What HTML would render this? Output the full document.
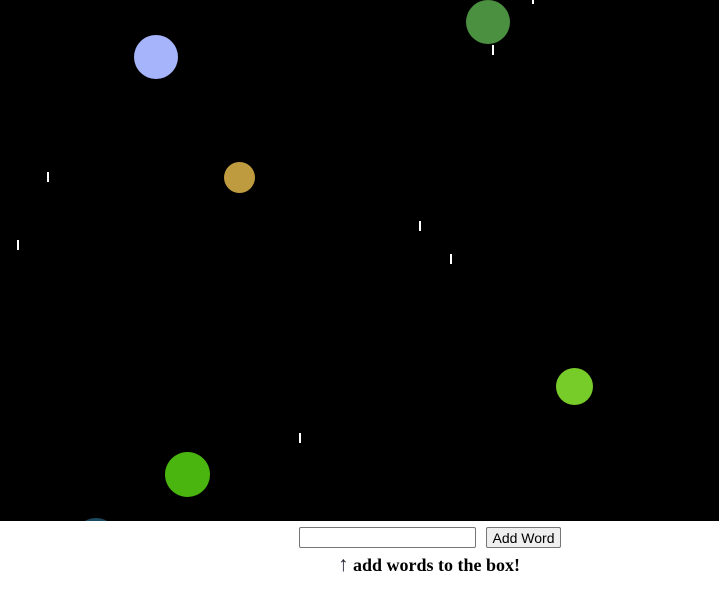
<!DOCTYPE html><html><head><style>
body{margin:0;width:719px;height:591px;background:#fff;position:relative;overflow:hidden;font-family:"Liberation Serif",serif}
#c{position:absolute;left:0;top:0;width:719px;height:521px;background:#000;overflow:hidden}
.d{position:absolute;border-radius:50%}
.t{position:absolute;width:2px;height:10px;background:#fff}
input{position:absolute;left:299px;top:527px;width:171px;height:17px;border:1px solid #767676;border-radius:2px;padding:1px 2px;margin:0}
button{position:absolute;left:486px;top:527px;width:75px;height:21px;font:14px "Liberation Sans",sans-serif;background:#efefef;border:1px solid #767676;border-radius:2px;padding:0;margin:0}
#m{position:absolute;left:338px;top:552px;font-weight:bold;font-size:18px}
</style></head><body>
<div id="c">
<div class="d" style="left:134px;top:35px;width:44px;height:44px;background:#a6b4fb"></div>
<div class="d" style="left:466px;top:0px;width:44px;height:44px;background:#4b8f40"></div>
<div class="d" style="left:224px;top:162px;width:31px;height:31px;background:#bf9b3f"></div>
<div class="d" style="left:556px;top:368px;width:37px;height:37px;background:#78cc2a"></div>
<div class="d" style="left:165px;top:452px;width:45px;height:45px;background:#4bb50f"></div>
<div class="d" style="left:74px;top:518px;width:44px;height:44px;background:#1d4a63"></div>
<div class="t" style="left:532px;top:-6px"></div>
<div class="t" style="left:492px;top:45px"></div>
<div class="t" style="left:47px;top:172px"></div>
<div class="t" style="left:17px;top:240px"></div>
<div class="t" style="left:419px;top:221px"></div>
<div class="t" style="left:450px;top:254px"></div>
<div class="t" style="left:299px;top:433px"></div>
</div>
<input type="text"><button>Add Word</button>
<div id="m"><span style="color:#223;font-weight:normal;font-size:21px">↑</span> add words to the box!</div>
</body></html>
